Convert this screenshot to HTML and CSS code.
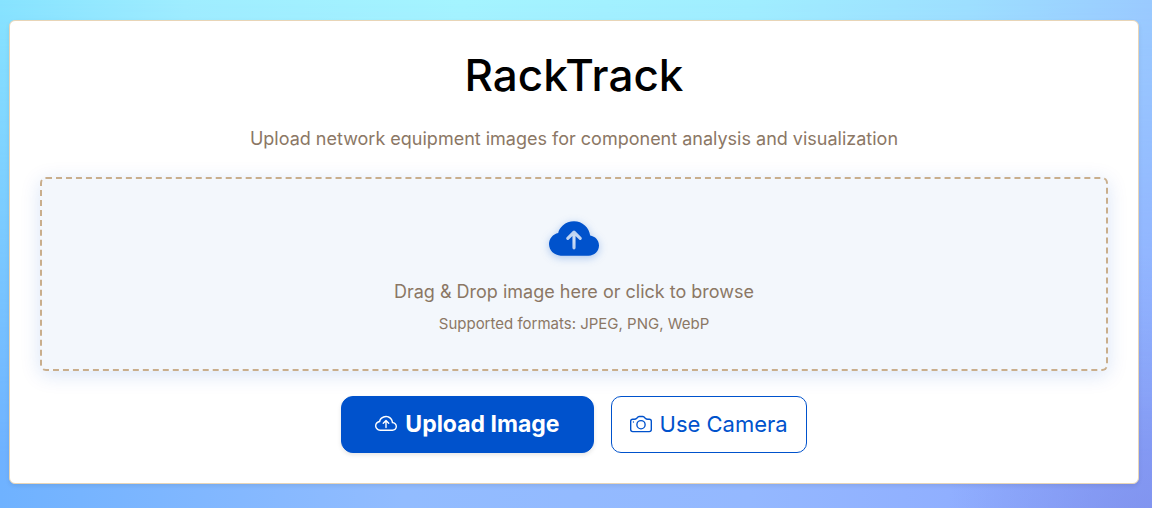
FILE: index.html
```html
<!DOCTYPE html>
<html lang="en">
<head>
<meta charset="utf-8">
<meta name="viewport" content="width=device-width, initial-scale=1">
<title>RackTrack</title>
<link rel="stylesheet" href="styles.css">
</head>
<body>
<main class="card">
  <h1 class="title">RackTrack</h1>
  <p class="lead">Upload network equipment images for component analysis and visualization</p>
  <button type="button" class="dropzone">
    <svg class="dropzone-icon" viewBox="0 0 16 16" aria-hidden="true"><path d="M8 2a5.53 5.53 0 0 0-3.594 1.342c-.766.66-1.321 1.52-1.464 2.383C1.266 6.095 0 7.555 0 9.318 0 11.366 1.708 13 3.781 13h8.906C14.502 13 16 11.57 16 9.773c0-1.636-1.242-2.969-2.834-3.194C12.923 3.999 10.69 2 8 2m2.354 5.146a.5.5 0 0 1-.708.708L8.5 6.707V10.5a.5.5 0 0 1-1 0V6.707L6.354 7.854a.5.5 0 1 1-.708-.708l2-2a.5.5 0 0 1 .708 0z"/></svg>
    <span class="dropzone-text">Drag &amp; Drop image here or click to browse</span>
    <span class="dropzone-hint">Supported formats: JPEG, PNG, WebP</span>
  </button>
  <div class="actions">
    <button type="button" class="btn btn-primary">
      <svg class="btn-icon" viewBox="0 0 16 16" aria-hidden="true"><path fill-rule="evenodd" d="M7.646 5.146a.5.5 0 0 1 .708 0l2 2a.5.5 0 0 1-.708.708L8.5 6.707V10.5a.5.5 0 0 1-1 0V6.707L6.354 7.854a.5.5 0 1 1-.708-.708z"/><path d="M4.406 3.342A5.53 5.53 0 0 1 8 2c2.69 0 4.923 2 5.166 4.579C14.758 6.804 16 8.137 16 9.773 16 11.569 14.502 13 12.687 13H3.781C1.708 13 0 11.366 0 9.318c0-1.763 1.266-3.223 2.942-3.593.143-.863.698-1.723 1.464-2.383m.653.757c-.757.653-1.153 1.44-1.153 2.056v.448l-.445.049C2.064 6.805 1 7.952 1 9.318 1 10.785 2.23 12 3.781 12h8.906C13.98 12 15 10.988 15 9.773c0-1.216-1.02-2.228-2.313-2.228h-.5v-.5C12.188 4.825 10.328 3 8 3a4.53 4.53 0 0 0-2.941 1.1z"/></svg>
      Upload Image
    </button>
    <button type="button" class="btn btn-outline">
      <svg class="btn-icon" viewBox="0 0 16 16" aria-hidden="true"><path d="M15 12a1 1 0 0 1-1 1H2a1 1 0 0 1-1-1V6a1 1 0 0 1 1-1h1.172a3 3 0 0 0 2.12-.879l.83-.828A1 1 0 0 1 6.827 3h2.344a1 1 0 0 1 .707.293l.828.828A3 3 0 0 0 12.828 5H14a1 1 0 0 1 1 1zM2 4a2 2 0 0 0-2 2v6a2 2 0 0 0 2 2h12a2 2 0 0 0 2-2V6a2 2 0 0 0-2-2h-1.172a2 2 0 0 1-1.414-.586l-.828-.828A2 2 0 0 0 9.172 2H6.828a2 2 0 0 0-1.414.586l-.828.828A2 2 0 0 1 3.172 4z"/><path d="M8 11a2.500 2.500 0 1 1 0-5 2.500 2.500 0 0 1 0 5m0 1a3.500 3.500 0 1 0 0-7 3.500 3.500 0 0 0 0 7M3 6.500a.5.5 0 1 1-1 0 .5.5 0 0 1 1 0"/></svg>
      Use Camera
    </button>
  </div>
</main>
</body>
</html>
```
FILE: styles.css
```css
* {
  box-sizing: border-box;
}

body {
  min-height: 100vh;
  margin: 0;
  padding: 20px 13px 24px 9px;
  font-family: Inter, sans-serif;
  color: #8b7765;
  background:
    radial-gradient(ellipse 18% 60% at 100% 110%, rgba(124, 140, 232, 0.8) 0%, rgba(143, 163, 255, 0) 100%),
    linear-gradient(to right, #6fb2ff 0%, #92bcff 35%, #94b8ff 65%, #8ca6ff 100%);
  position: relative;
  z-index: 0;
}

body::before {
  content: "";
  position: absolute;
  inset: 0;
  z-index: -1;
  background: linear-gradient(to right, #87e3ff 0%, #9fedff 16%, #a4f4ff 40%, #a0eeff 65%, #9ddfff 84%, #9acaff 100%);
  mask-image: linear-gradient(to bottom, #000 0%, transparent 90%);
}

.card {
  padding: 29px 30px 30px;
  text-align: center;
  background: #fff;
  border: 1px solid #e8d5b7;
  border-radius: 6px;
  box-shadow: 0 2px 4px rgba(0, 0, 0, 0.08);
}

.title {
  margin: 0 0 26px;
  font-size: 44px;
  font-weight: 500;
  line-height: 50px;
  color: #000;
}

.lead {
  margin: 0 0 25px;
  font-size: 18px;
  line-height: 26px;
}

.dropzone {
  display: flex;
  flex-direction: column;
  align-items: center;
  width: 100%;
  padding: 36px 20px 34px;
  font: inherit;
  color: inherit;
  background: #f3f7fc;
  border: 2px dashed #c9ae8c;
  border-radius: 6px;
  box-shadow: 0 4px 20px rgba(0, 82, 204, 0.15);
  cursor: pointer;
}

.dropzone-icon {
  width: 50px;
  height: 50px;
  margin-bottom: 14px;
  fill: #0052cc;
  filter: drop-shadow(0 2px 4px rgba(0, 82, 204, 0.3));
}

.dropzone-text {
  margin-bottom: 8px;
  font-size: 18px;
  line-height: 26px;
}

.dropzone-hint {
  font-size: 15px;
  line-height: 22px;
}

.actions {
  display: flex;
  flex-wrap: wrap;
  justify-content: center;
  gap: 17px;
  margin-top: 25px;
}

.btn {
  display: inline-flex;
  align-items: center;
  gap: 8px;
  padding: 11px 18px;
  font-family: inherit;
  font-size: 22px;
  font-weight: 400;
  line-height: 33px;
  border: 1px solid #0052cc;
  border-radius: 10px;
  cursor: pointer;
}

.btn-primary {
  padding: 11px 33px;
  font-size: 23px;
  font-weight: 700;
  color: #fff;
  background: #0052cc;
  border-radius: 12px;
  box-shadow: 0 2px 4px rgba(0, 0, 0, 0.1);
}

.btn-outline {
  color: #0052cc;
  background: #fff;
}

.btn-icon {
  width: 22px;
  height: 22px;
  margin-bottom: 2px;
  fill: currentColor;
}
```
